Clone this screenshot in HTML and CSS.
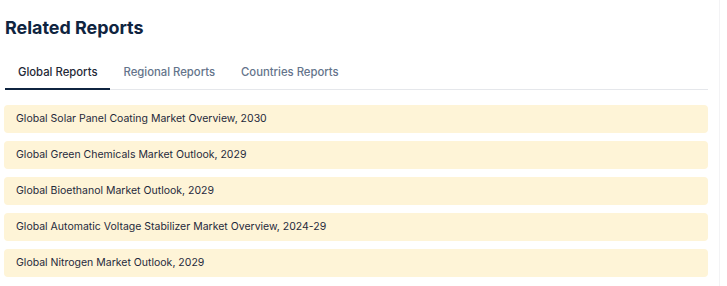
FILE: index.html
```html
<!DOCTYPE html>
<html lang="en">
<head>
  <meta charset="UTF-8" />
  <meta name="viewport" content="width=device-width, initial-scale=1.0" />
  <title>Related Reports</title>
  <link rel="stylesheet" href="styles.css">
</head>
<body>
  <div class="page">
    <h2 class="title">Related Reports</h2>

    <div class="tabs">
      <span class="tab active">Global Reports</span>
      <span class="tab">Regional Reports</span>
      <span class="tab">Countries Reports</span>
    </div>

    <ul class="reports">
      <li>Global Solar Panel Coating Market Overview, 2030</li>
      <li>Global Green Chemicals Market Outlook, 2029</li>
      <li>Global Bioethanol Market Outlook, 2029</li>
      <li>Global Automatic Voltage Stabilizer Market Overview, 2024-29</li>
      <li>Global Nitrogen Market Outlook, 2029</li>
    </ul>
  </div>
</body>
</html>
```

FILE: styles.css
```css
body {
  margin: 0;
  font-family: Inter, "Liberation Sans", sans-serif;
  background: #fff;
}

.page {
  width: 704px;
  padding: 17px 11px 0 4px;
  border-right: 1px solid #f3f3f5;
  height: 269px;
}

.title {
  margin: 0 0 0 1px;
  font-size: 17.9px;
  font-weight: 700;
  color: #0f2440;
  line-height: 22px;
}

.tabs {
  display: flex;
  margin: 18px 0 15px 1px;
  border-bottom: 1px solid #e5e7eb;
}

.tab {
  padding: 8px 13px 9px;
  font-size: 11.3px;
  font-weight: 500;
  color: #64748b;
  margin-bottom: -1px;
  border-bottom: 2px solid transparent;
}

.tab.active {
  color: #1f2937;
  border-bottom-color: #0f2440;
}

.reports {
  list-style: none;
  margin: 0;
  padding: 0;
  display: flex;
  flex-direction: column;
  gap: 8px;
}

.reports li {
  background: #fef4d7;
  border-radius: 4px;
  height: 28px;
  line-height: 28px;
  padding: 0 12px;
  font-size: 10.5px;
  color: #1e293b;
}
```
